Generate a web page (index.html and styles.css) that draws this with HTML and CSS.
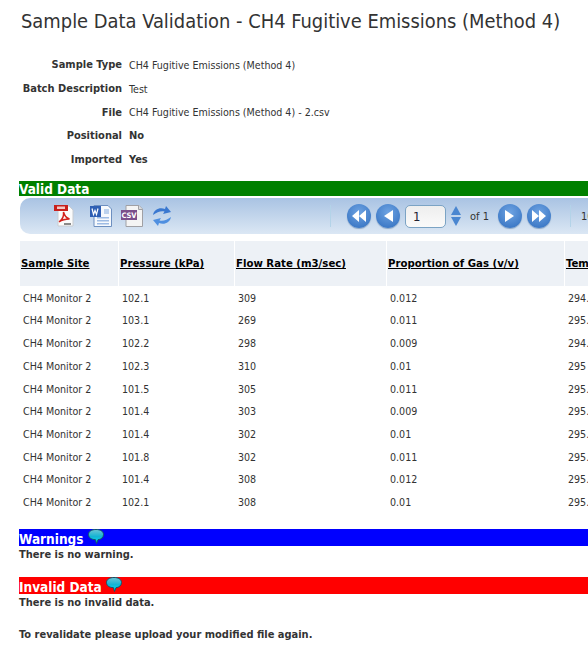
FILE: index.html
```html
<!doctype html>
<html>
<head>
<meta charset="utf-8">
<title>Sample Data Validation</title>
<link rel="stylesheet" href="styles.css">
</head>

<body>
<div class="page">
	<h1 class="title">Sample Data Validation - CH4 Fugitive Emissions (Method 4)</h1>

	<table class="details">
		<tr><th>Sample Type</th><td>CH4 Fugitive Emissions (Method 4)</td></tr>
		<tr><th>Batch Description</th><td>Test</td></tr>
		<tr><th>File</th><td>CH4 Fugitive Emissions (Method 4) - 2.csv</td></tr>
		<tr><th>Positional</th><td class="strong">No</td></tr>
		<tr><th>Imported</th><td class="strong">Yes</td></tr>
	</table>

	<h2 class="bar bar-green">Valid Data</h2>

	<div class="toolbar">
		<div class="exports">
			<svg class="icon pdf" width="20" height="22" viewBox="0 0 20 22">
				<path d="M4 1h11l4 4v16H4z" fill="#fbfbfb" stroke="#c9ccd0"/>
				<rect x="0" y="0" width="14" height="6" fill="#c8201c"/>
				<rect x="3" y="1.500" width="8" height="2.500" fill="#f3c8c4"/>
				<path d="M5 17c3-2 5-6 4.500-10 1 4 3 6 6 7-3 0-7 .5-10.500 3z" fill="none" stroke="#d3201c" stroke-width="1.500"/>
				<rect x="10" y="18" width="7" height="2" fill="#8a8a8a"/>
			</svg>
			<svg class="icon word" width="22" height="22" viewBox="0 0 22 22">
				<path d="M4 .5h14l3.500 3.500v17.500H4z" fill="#f6f9fd" stroke="#6d8fc0"/>
				<rect x="7" y="12" width="12" height="1.500" fill="#9dbbe4"/>
				<rect x="7" y="15" width="12" height="1.500" fill="#9dbbe4"/>
				<rect x="7" y="18" width="12" height="1.500" fill="#9dbbe4"/>
				<rect x="14" y="4" width="5" height="5" fill="#bcd2ee"/>
				<rect x="0" y="1" width="11" height="11" fill="#2f5fb4"/>
				<path d="M2 3.500l1.500 6 1.500-4 1.500 4 1.500-6" fill="none" stroke="#fff" stroke-width="1.200"/>
			</svg>
			<svg class="icon csv" width="22" height="22" viewBox="0 0 22 22">
				<path d="M5 .5h13l3.500 3.500v17.500H5z" fill="#f4f4f4" stroke="#a0a0a4"/>
				<path d="M17.500 .5v4h4" fill="#dcdcdc" stroke="#a0a0a4"/>
				<rect x="0" y="5" width="16" height="10" fill="#7b4f8b"/>
				<text x="8" y="13" class="csv-label" text-anchor="middle">CSV</text>
			</svg>
			<svg class="icon refresh" width="18" height="22" viewBox="0 0 18 22">
				<path d="M0 10C1 4 7 2 12 4l1-3 5 6-8 2 1.500-2.500C8 5.500 4 7 0 10z" fill="#3a78d0"/>
				<path d="M18 12c-1 6-7 8-12 6l-1 3-5-6 8-2-1.500 2.500C10 16.500 14 15 18 12z" fill="#4f8fe0"/>
			</svg>
		</div>
		<span class="sep"></span>
		<div class="pager">
			<button class="nav"><svg width="14" height="12" viewBox="0 0 14 12"><path d="M7 0v12L0 6zM14 0v12L7 6z" fill="#fff"/></svg></button>
			<button class="nav"><svg width="9" height="12" viewBox="0 0 9 12"><path d="M9 0v12L0 6z" fill="#fff"/></svg></button>
			<span class="page-input">1</span>
			<span class="spin">
				<svg width="10" height="9" viewBox="0 0 10 9"><path d="M5 0l5 9H0z" fill="#4a86d0"/></svg>
				<svg width="10" height="9" viewBox="0 0 10 9"><path d="M0 0h10L5 9z" fill="#4a86d0"/></svg>
			</span>
			<span class="of">of 1</span>
			<button class="nav"><svg width="9" height="12" viewBox="0 0 9 12"><path d="M0 0v12l9-6z" fill="#fff"/></svg></button>
			<button class="nav"><svg width="14" height="12" viewBox="0 0 14 12"><path d="M0 0v12l7-6zM7 0v12l7-6z" fill="#fff"/></svg></button>
		</div>
		<span class="sep"></span>
		<span class="page-size">10</span>
	</div>

	<table class="grid">
		<thead>
			<tr>
				<th class="c1"><a>Sample Site</a></th>
				<th class="c2"><a>Pressure (kPa)</a></th>
				<th class="c3"><a>Flow Rate (m3/sec)</a></th>
				<th class="c4"><a>Proportion of Gas (v/v)</a></th>
				<th class="c5"><a>Temperature (K)</a></th>
			</tr>
		</thead>
		<tbody>
			<tr><td>CH4 Monitor 2</td><td>102.1</td><td>309</td><td>0.012</td><td>294.5</td></tr>
			<tr><td>CH4 Monitor 2</td><td>103.1</td><td>269</td><td>0.011</td><td>295.1</td></tr>
			<tr><td>CH4 Monitor 2</td><td>102.2</td><td>298</td><td>0.009</td><td>294.8</td></tr>
			<tr><td>CH4 Monitor 2</td><td>102.3</td><td>310</td><td>0.01</td><td>295</td></tr>
			<tr><td>CH4 Monitor 2</td><td>101.5</td><td>305</td><td>0.011</td><td>295.2</td></tr>
			<tr><td>CH4 Monitor 2</td><td>101.4</td><td>303</td><td>0.009</td><td>295.3</td></tr>
			<tr><td>CH4 Monitor 2</td><td>101.4</td><td>302</td><td>0.01</td><td>295.1</td></tr>
			<tr><td>CH4 Monitor 2</td><td>101.8</td><td>302</td><td>0.011</td><td>295.4</td></tr>
			<tr><td>CH4 Monitor 2</td><td>101.4</td><td>308</td><td>0.012</td><td>295.2</td></tr>
			<tr><td>CH4 Monitor 2</td><td>102.1</td><td>308</td><td>0.01</td><td>295.3</td></tr>
		</tbody>
	</table>

	<h2 class="bar bar-blue">Warnings <svg class="bubble" width="16" height="15" viewBox="0 0 16 15"><use href="#bubble"/></svg></h2>
	<p class="note">There is no warning.</p>

	<h2 class="bar bar-red">Invalid Data <svg class="bubble" width="16" height="15" viewBox="0 0 16 15"><use href="#bubble"/></svg></h2>
	<p class="note">There is no invalid data.</p>

	<p class="note revalidate">To revalidate please upload your modified file again.</p>
</div>

<svg width="0" height="0" class="defs">
	<defs>
		<linearGradient id="bubbleFill" x1="0" y1="0" x2="0" y2="1">
			<stop offset="0" stop-color="#6cc4d4"/>
			<stop offset=".5" stop-color="#14b4d4"/>
			<stop offset="1" stop-color="#00e0f4"/>
		</linearGradient>
		<g id="bubble">
			<path d="M8 .5c4.500 0 7.500 2 7.500 5s-2.500 5-5.500 5.200L8.500 14.500 7.500 10.700C3 10.500 .5 8.500 .5 5.500s3-5 7.500-5z" fill="url(#bubbleFill)" stroke="#0f5468" stroke-width="1"/>
		</g>
	</defs>
</svg>
</body>
</html>
```

FILE: styles.css
```css
*{margin:0;padding:0;}
html,body{overflow:hidden;height:100%;background:#fff;}
body{font-family:"DejaVu Sans Condensed","DejaVu Sans",sans-serif;font-stretch:condensed;font-size:10.600px;color:#333;}
.defs{position:absolute;}

.page{padding:9px 0 0 19px;width:569px;overflow:hidden;}
.title{font-weight:normal;font-size:19.900px;line-height:26px;color:#333;margin-left:2px;white-space:nowrap;}

.details{border-collapse:collapse;margin-top:18px;}
.details th{width:103px;padding-right:7px;text-align:right;font-weight:bold;font-size:11px;white-space:nowrap;height:23.7px;}
.details td{white-space:nowrap;}
.details .strong{font-weight:bold;font-size:11px;}

.bar{display:flex;align-items:flex-start;gap:4px;font-size:13.500px;line-height:20px;height:17px;font-weight:bold;color:#fff;white-space:nowrap;}
.bar-green{height:15px;line-height:16px;background:#008000;margin-top:10px;}
.bar-blue{background:#00f;margin-top:16px;}
.bar-red{background:#f00;margin-top:14px;}
.bubble{flex:none;}

.toolbar{display:flex;align-items:center;width:620px;height:36px;margin:2px 0 0 1px;border-radius:10px 0 0 10px;background:linear-gradient(#a9c3e3,#dbe7f4);}
.exports{display:flex;align-items:center;width:310px;padding-left:34px;box-sizing:border-box;}
.icon{display:block;}
.word{margin-left:16px;}
.csv{margin-left:9px;}
.refresh{margin-left:10px;}
.csv-label{fill:#fff;font-size:7.500px;font-weight:bold;}
.sep{width:1px;height:22px;background:#b3d3e8;}
.pager{display:flex;align-items:center;padding:0 14px 0 16px;}
.nav{width:24px;height:24px;border:0;border-radius:50%;margin-right:5px;display:flex;align-items:center;justify-content:center;background:radial-gradient(circle at 50% 35%,#6ea3e2,#2f6dbe);box-shadow:0 1px 1px #8aa6c6;}
.page-input{width:32px;height:21px;line-height:21px;padding-left:7px;border:1px solid #7ba3c4;border-radius:5px;background:linear-gradient(#eee,#fafafa);font-size:13px;color:#223;}
.spin{display:flex;flex-direction:column;gap:2px;margin-left:5px;}
.spin svg{display:block;}
.of{margin:0 9px 0 9px;font-size:11px;}
.page-size{margin-left:10px;font-size:11px;}

.grid{border-collapse:separate;border-spacing:1px 0;margin-top:7px;table-layout:fixed;width:657px;}
.grid th{box-sizing:border-box;background:#edf1f6;height:45px;text-align:left;padding-left:1px;font-size:11.300px;color:#000;white-space:nowrap;}
.grid th a{text-decoration:underline;}
.grid td{height:22.7px;padding-left:3px;white-space:nowrap;}
.c1{width:98px;}
.c2{width:115px;}
.c3{width:151px;}
.c4{width:177px;}
.c5{width:110px;}

.note{font-weight:bold;font-size:11px;line-height:17px;}
.revalidate{margin-top:15px;}
```
